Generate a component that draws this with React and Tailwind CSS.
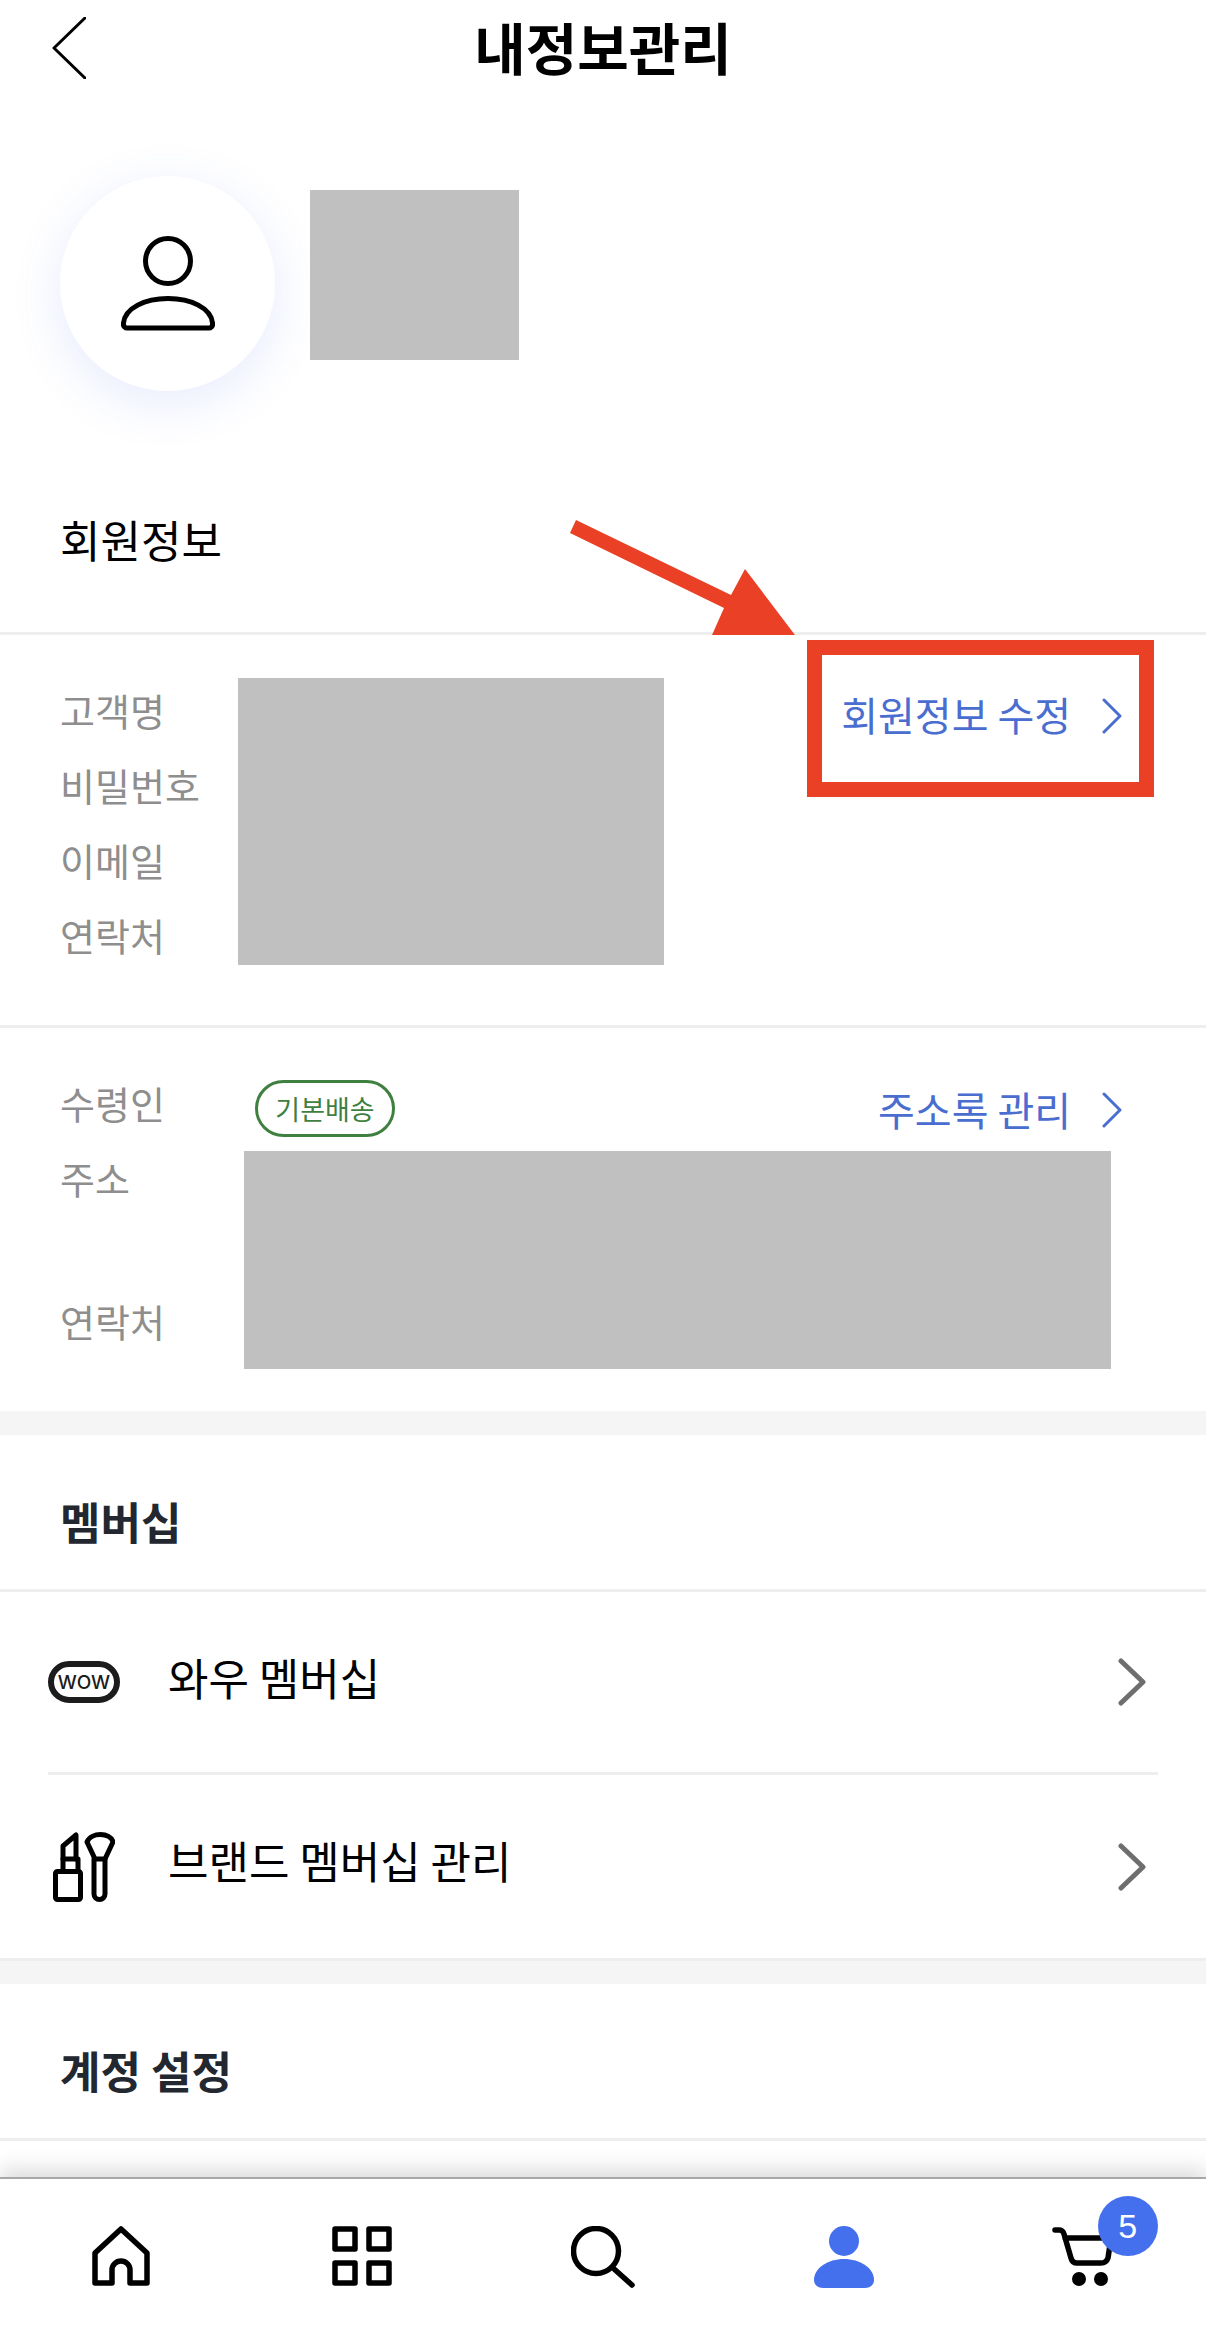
import React from 'react';

const Chevron = ({ className = '' }) => (
  <svg viewBox="0 0 20 36" className={className} fill="none" stroke="currentColor" strokeWidth="3" strokeLinecap="round" strokeLinejoin="round">
    <path d="M2 2l16 16L2 34" />
  </svg>
);

const RowChevron = () => (
  <svg viewBox="0 0 28 48" className="w-[28px] h-[48px] text-[#6e6e6e]" fill="none" stroke="currentColor" strokeWidth="5" strokeLinecap="round" strokeLinejoin="round">
    <path d="M3 3l22 21L3 45" />
  </svg>
);

const Redacted = ({ className = '' }) => <div className={`bg-[#c0c0c0] ${className}`} />;

const Label = ({ children, className = '' }) => (
  <div className={`h-[75px] leading-[75px] text-[38px] text-[#8e8e8e] whitespace-nowrap ${className}`}>{children}</div>
);

const BlueLink = ({ children }) => (
  <div className="flex items-center gap-[31px] text-[#4a6dd0] text-[40px] leading-[50px] whitespace-nowrap">
    <span>{children}</span>
    <Chevron className="w-[20px] h-[36px] mt-[3px]" />
  </div>
);

const MemberRow = ({ icon, label, className = '', textClass = '' }) => (
  <div className={`flex items-center pr-[60px] ${className}`}>
    <div className="w-[168px] flex items-center shrink-0">{icon}</div>
    <span className={`flex-1 text-[44px] text-black leading-[60px] whitespace-nowrap ${textClass}`}>{label}</span>
    <RowChevron />
  </div>
);

const WowIcon = () => (
  <div className="ml-[48px] w-[72px] h-[42px] rounded-full border-[6px] border-[#1c1c1c] flex items-center justify-center font-['Inter',sans-serif] text-[19px] font-medium leading-none text-[#1c1c1c]">
    WOW
  </div>
);

const BeautyIcon = () => (
  <svg viewBox="0 0 62 70" className="ml-[53px] w-[62px] h-[70px]" fill="none" stroke="black" strokeWidth="5" strokeLinejoin="round" strokeLinecap="round">
    <rect x="2.5" y="39.5" width="25" height="28" rx="2" />
    <path d="M10 38V27H25V38" />
    <path d="M10 27V14L23 3V27" />
    <path d="M34 10C36 5 42 2.500 47.500 2.500S59 5 60 10L52 27H42Z" />
    <path d="M41 27V62a5.500 5.500 0 0 0 11 0V27" />
  </svg>
);

const NavCell = ({ children }) => <div className="relative flex justify-center">{children}</div>;

export default function App() {
  return (
    <div className="relative w-[1206px] h-[2334px] overflow-hidden bg-white font-['Noto_Sans_CJK_KR',sans-serif]">
      {/* Header */}
      <header className="grid grid-cols-[1fr_auto_1fr] items-center h-[96px] pl-[52px]">
        <svg viewBox="0 0 34 62" className="w-[34px] h-[62px]" fill="none" stroke="black" strokeWidth="3" strokeLinecap="round" strokeLinejoin="round">
          <path d="M33 1L2 31l31 30" />
        </svg>
        <h1 className="text-[56px] font-bold text-black leading-none -ml-[52px] -mt-[4px]">내정보관리</h1>
        <div />
      </header>

      {/* Profile */}
      <section className="h-[384px] pt-[80px] pl-[60px] flex items-start gap-[35px]">
        <div className="w-[215px] h-[215px] rounded-full bg-white shadow-[0_12px_50px_rgba(70,100,240,0.13)] flex items-center justify-center">
          <svg viewBox="0 0 94 95" className="w-[94px] h-[95px]" fill="none" stroke="black" strokeWidth="5" strokeLinejoin="round">
            <circle cx="47" cy="25" r="22.500" />
            <path d="M7 92a4 4 0 0 1-4.500-5C4 72 24 62.500 47 62.500S90 72 91.500 87a4 4 0 0 1-4.500 5Z" />
          </svg>
        </div>
        <Redacted className="w-[209px] h-[170px] mt-[14px]" />
      </section>

      {/* Section title */}
      <div className="h-[155px] pt-[29px] pl-[60px] border-b-[3px] border-[#eeeeee] text-[44px] leading-[60px] text-black">회원정보</div>

      {/* Member info */}
      <section className="relative h-[393px] pl-[60px] pr-[84px] flex items-start border-b-[3px] border-[#eeeeee]">
        <div className="w-[178px] pt-[37px] shrink-0">
          <Label>고객명</Label>
          <Label>비밀번호</Label>
          <Label>이메일</Label>
          <Label>연락처</Label>
        </div>
        <Redacted className="w-[426px] h-[287px] mt-[43px]" />
        <div className="ml-auto mt-[54px]">
          <BlueLink>회원정보 수정</BlueLink>
        </div>
        <div className="absolute top-[5px] right-[52px] w-[347px] h-[157px] border-[15px] border-[#e94026]" />
      </section>

      {/* Delivery info */}
      <section className="h-[383px] pl-[60px] pr-[84px] flex items-start">
        <div className="w-[184px] pt-[37px] shrink-0">
          <Label>수령인</Label>
          <Label>주소</Label>
          <Label className="mt-[68px]">연락처</Label>
        </div>
        <div className="flex-1 pt-[52px]">
          <div className="h-[57px] pl-[11px] flex items-center justify-between">
            <div className="w-[140px] h-[57px] rounded-full border-[3px] border-[#3f7f3f] text-[#3f7f3f] text-[27px] leading-none flex items-center justify-center">
              기본배송
            </div>
            <BlueLink>주소록 관리</BlueLink>
          </div>
          <Redacted className="w-[867px] h-[218px] mt-[14px]" />
        </div>
      </section>

      <div className="h-[24px] bg-[#f5f5f5]" />

      {/* Membership */}
      <div className="h-[157px] pt-[18px] pl-[60px] flex items-center border-b-[3px] border-[#eeeeee] text-[44px] font-bold text-[#23272f]">멤버십</div>
      <MemberRow icon={<WowIcon />} label="와우 멤버십" className="h-[180px]" textClass="-mt-[10px]" />
      <div className="h-[3px] mx-[48px] bg-[#eeeeee]" />
      <MemberRow icon={<BeautyIcon />} label="브랜드 멤버십 관리" className="h-[183px]" textClass="-mt-[14px]" />
      <div className="h-[26px] bg-[#f5f5f5] border-t-[3px] border-[#eeeeee]" />

      {/* Account */}
      <div className="h-[157px] pt-[18px] pl-[60px] flex items-center border-b-[3px] border-[#eeeeee] text-[44px] font-bold text-[#23272f]">계정 설정</div>

      {/* Annotation arrow */}
      <svg viewBox="0 0 240 130" className="absolute left-[560px] top-[510px] w-[240px] h-[130px]">
        <polygon points="16,10 10,23 164,98 152,125 235,125 185,59 171,85" fill="#e94026" />
      </svg>

      {/* Bottom tab bar */}
      <nav className="absolute inset-x-0 bottom-0 h-[157px] pt-[47px] bg-white border-t-2 border-[#a8a8a8] shadow-[0_-8px_20px_rgba(0,0,0,0.14)] grid grid-cols-5">
        <NavCell>
          <svg viewBox="0 0 58 60" className="w-[58px] h-[60px]" fill="none" stroke="black" strokeWidth="5.500" strokeLinejoin="round">
            <path d="M3 57V27L29 3l26 24v30H38V44a9 9 0 0 0-18 0v13Z" />
          </svg>
        </NavCell>
        <NavCell>
          <svg viewBox="0 0 60 60" className="w-[60px] h-[60px]" fill="none" stroke="black" strokeWidth="5.500" strokeLinejoin="round">
            <rect x="3" y="3" width="20" height="20" />
            <rect x="37" y="3" width="20" height="20" />
            <rect x="3" y="37" width="20" height="20" />
            <rect x="37" y="37" width="20" height="20" />
          </svg>
        </NavCell>
        <NavCell>
          <svg viewBox="0 0 64 62" className="w-[64px] h-[62px]" fill="none" stroke="black" strokeWidth="5.500" strokeLinecap="round">
            <circle cx="25" cy="25" r="22.500" />
            <path d="M42 42l19 17" />
          </svg>
        </NavCell>
        <NavCell>
          <svg viewBox="0 0 60 62" className="w-[60px] h-[62px]" fill="#4470ee">
            <circle cx="30" cy="15" r="15" />
            <path d="M9 62C3 62 0 58 0 54 0 42 14 33 30 33s30 9 30 21c0 4-3 8-9 8Z" />
          </svg>
        </NavCell>
        <NavCell>
          <svg viewBox="0 0 64 62" className="w-[64px] h-[62px] -ml-[2px]" fill="none" stroke="black" strokeWidth="5.500" strokeLinecap="round" strokeLinejoin="round">
            <path d="M3 4h4c3 0 4 1 5 4l7 24c1 4 3 5 6 5h24c4 0 6-2 7-5l3-20H13" />
            <circle cx="27" cy="53" r="7" fill="black" stroke="none" />
            <circle cx="49" cy="53" r="7" fill="black" stroke="none" />
          </svg>
          <span className="absolute left-[133px] -top-[30px] w-[60px] h-[60px] rounded-full bg-[#4470ee] text-white text-[34px] leading-none flex items-center justify-center font-['Liberation_Sans',sans-serif]">5</span>
        </NavCell>
      </nav>
    </div>
  );
}
